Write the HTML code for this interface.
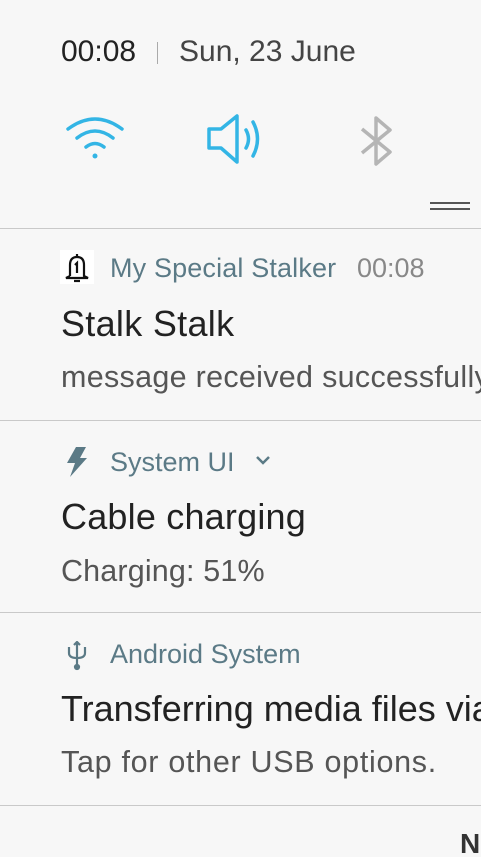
<!DOCTYPE html>
<html><head><meta charset="utf-8"><style>
html,body{margin:0;width:481px;height:857px;overflow:hidden}
body{background:#f7f7f7;position:relative;font-family:"Liberation Sans",sans-serif}
.t{position:absolute;white-space:nowrap;line-height:1}
.hr{position:absolute;left:0;width:481px;height:1px;background:#c9c9c9}
.b{font-size:30.5px;color:#555;letter-spacing:0.3px}
</style></head><body>
<div class="t" style="left:61px;top:37px;font-size:30px;color:#222">00:08</div>
<div style="position:absolute;left:157px;top:42px;width:1px;height:22px;background:#aaa"></div>
<div class="t" style="left:179px;top:37px;font-size:30px;color:#444">Sun, 23 June</div>

<svg style="position:absolute;left:66px;top:115px" width="60" height="50" viewBox="0 0 60 50" fill="none" stroke="#33b5e5" stroke-width="3.5" stroke-linecap="round">
<path d="M2 14 Q29 -6 56 14"/><path d="M11 23 Q29 9 47 23"/><path d="M20 32 Q29 25 38 32"/>
<circle cx="29" cy="41" r="2.5" fill="#33b5e5" stroke="none"/></svg>

<svg style="position:absolute;left:206px;top:112px" width="64" height="56" viewBox="0 0 64 56" fill="none" stroke="#33b5e5" stroke-width="3.5" stroke-linejoin="round" stroke-linecap="round">
<path d="M3 17 H15 L31 4 V50 L15 36 H3 Z"/><path d="M40 18 Q45 27 40 36"/><path d="M47 10 Q56 27 47 44"/></svg>

<svg style="position:absolute;left:358px;top:114px" width="40" height="54" viewBox="0 0 40 54" fill="none" stroke="#b5b5b5" stroke-width="3.5" stroke-linejoin="round">
<path d="M4 15 L32 38 L18 50 V4 L32 16 L4 39"/></svg>

<div style="position:absolute;left:430px;top:202px;width:40px;height:2px;background:#555"></div>
<div style="position:absolute;left:430px;top:208px;width:40px;height:2px;background:#555"></div>
<div class="hr" style="top:228px"></div>

<svg style="position:absolute;left:60px;top:250px" width="34" height="34" viewBox="0 0 34 34" fill="none" stroke="#111" stroke-width="2.2">
<rect x="0" y="0" width="34" height="34" fill="#fff" stroke="none"/>
<path d="M10 26 V15 Q10 7 17 7 Q24 7 24 15 V26 L28 28 H6 L10 26"/><path d="M17 4 V7"/><path d="M14 31 H20"/><path d="M15 15 L17 13 V23"/></svg>
<div class="t" style="left:110px;top:255px;font-size:27px;color:#5b7a86;letter-spacing:0.15px">My Special Stalker</div>
<div class="t" style="left:357px;top:255px;font-size:27px;color:#888">00:08</div>
<div class="t" style="left:61px;top:306px;font-size:36px;color:#222;letter-spacing:0.3px">Stalk Stalk</div>
<div class="t b" style="left:61px;top:362px">message received successfully</div>
<div class="hr" style="top:420px"></div>

<svg style="position:absolute;left:64px;top:446px" width="26" height="32" viewBox="0 0 26 32">
<path d="M12 1 H22 L16 12 H23 L6 31 L11 17 H3 Z" fill="#5b7a86"/></svg>
<div class="t" style="left:110px;top:449px;font-size:27px;color:#5b7a86">System UI</div>
<svg style="position:absolute;left:254px;top:454px" width="18" height="12" viewBox="0 0 18 12" fill="none" stroke="#5b7a86" stroke-width="2.5"><path d="M3 3 L9 9 L15 3"/></svg>
<div class="t" style="left:61px;top:499px;font-size:36px;color:#222;letter-spacing:0.2px">Cable charging</div>
<div class="t b" style="left:61px;top:556px;letter-spacing:0.15px">Charging: 51%</div>
<div class="hr" style="top:612px"></div>

<svg style="position:absolute;left:66px;top:641px" width="22" height="30" viewBox="0 0 22 30" fill="none" stroke="#5b7a86" stroke-width="2.2">
<path d="M11 2 V27"/><path d="M3 6 V12 Q3 17 11 17 Q19 17 19 12 V6"/><circle cx="11" cy="26" r="2" fill="#5b7a86"/><path d="M8 4 L11 1 L14 4"/></svg>
<div class="t" style="left:110px;top:641px;font-size:27px;color:#5b7a86">Android System</div>
<div class="t" style="left:61px;top:691px;font-size:36px;color:#222">Transferring media files via USB</div>
<div class="t b" style="left:61px;top:747px;letter-spacing:0.7px">Tap for other USB options.</div>
<div class="hr" style="top:805px"></div>
<div class="t" style="left:460px;top:830px;font-size:28px;color:#333;font-weight:bold">N</div>
</body></html>
